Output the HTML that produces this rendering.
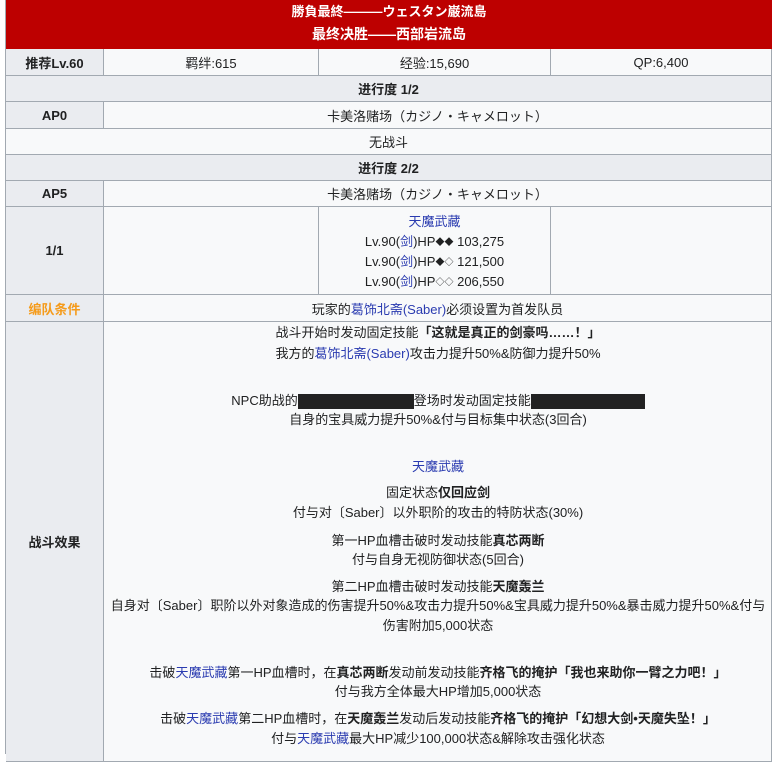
<!DOCTYPE html>
<html><head><meta charset="utf-8"><style>
*{margin:0;padding:0;box-sizing:border-box}
body{width:772px;height:754px;overflow:hidden;background:#fff;font-family:"Liberation Sans","Noto Sans CJK SC",sans-serif;font-size:13px;color:#202122;position:relative}
.a{position:absolute}
.c{position:absolute;border-right:1px solid #a2a9b1;border-bottom:1px solid #a2a9b1;display:flex;align-items:center;justify-content:center;text-align:center;background:#f8f9fa}
.h{background:#eaecf0;font-weight:bold}
.l{position:absolute;left:104px;width:668px;text-align:center;line-height:18px;white-space:nowrap}
b{font-weight:bold}
.bl{color:#2a3bb0}
.k{display:inline-block;background:#222;height:15px;vertical-align:middle}
.d{font-size:9px;vertical-align:1px}
</style></head><body>
<div class="a" style="left:0;top:0;width:6px;height:754px;border-right:1px solid #a2a9b1;background:#fff"></div>
<div class="a" style="left:6px;top:0;width:766px;height:49px;background:#bd0000;color:#fff;font-weight:bold;text-align:center">
<div style="position:absolute;top:3px;width:100%;line-height:18px">勝負最終———ウェスタン巌流島</div>
<div style="position:absolute;top:25px;width:100%;line-height:18px;font-size:14px">最终决胜——西部岩流岛</div>
</div>
<div class="c h" style="left:6px;top:49px;width:98px;height:27px">推荐Lv.60</div>
<div class="c" style="left:104px;top:49px;width:215px;height:27px">羁绊:615</div>
<div class="c" style="left:319px;top:49px;width:232px;height:27px">经验:15,690</div>
<div class="c" style="left:551px;top:49px;width:221px;height:27px">QP:6,400</div>
<div class="c h" style="left:6px;top:76px;width:766px;height:26px">进行度 1/2</div>
<div class="c h" style="left:6px;top:102px;width:98px;height:27px">AP0</div>
<div class="c" style="left:104px;top:102px;width:668px;height:27px">卡美洛赌场（カジノ・キャメロット）</div>
<div class="c" style="left:6px;top:129px;width:766px;height:26px">无战斗</div>
<div class="c h" style="left:6px;top:155px;width:766px;height:26px">进行度 2/2</div>
<div class="c h" style="left:6px;top:181px;width:98px;height:26px">AP5</div>
<div class="c" style="left:104px;top:181px;width:668px;height:26px">卡美洛赌场（カジノ・キャメロット）</div>
<div class="c h" style="left:6px;top:207px;width:98px;height:88px">1/1</div>
<div class="c" style="left:104px;top:207px;width:215px;height:88px"></div>
<div class="c" style="left:319px;top:207px;width:232px;height:88px;display:block;line-height:20px;padding-top:5px">
<div class="bl">天魔武藏</div><div>Lv.90(<span class="bl">剑</span>)HP<span class="d">◆◆</span> 103,275</div><div>Lv.90(<span class="bl">剑</span>)HP<span class="d">◆◇</span> 121,500</div><div>Lv.90(<span class="bl">剑</span>)HP<span class="d">◇◇</span> 206,550</div></div>
<div class="c" style="left:551px;top:207px;width:221px;height:88px"></div>
<div class="c h" style="left:6px;top:295px;width:98px;height:27px;color:#f59b1b">编队条件</div>
<div class="c" style="left:104px;top:295px;width:668px;height:27px">玩家的<span class="bl">葛饰北斋(Saber)</span>必须设置为首发队员</div>
<div class="c h" style="left:6px;top:322px;width:98px;height:440px">战斗效果</div>
<div class="c" style="left:104px;top:322px;width:668px;height:440px"></div>
<div class="l" style="top:324px">战斗开始时发动固定技能<b>「这就是真正的剑豪吗……！」</b></div>
<div class="l" style="top:345px">我方的<span class="bl">葛饰北斋(Saber)</span>攻击力提升50%&amp;防御力提升50%</div>
<div class="l" style="top:392px">NPC助战的<span class="k" style="width:116px"></span>登场时发动固定技能<span class="k" style="width:114px"></span></div>
<div class="l" style="top:411px">自身的宝具威力提升50%&amp;付与目标集中状态(3回合)</div>
<div class="l bl" style="top:458px">天魔武藏</div>
<div class="l" style="top:484px">固定状态<b>仅回应剑</b></div>
<div class="l" style="top:504px">付与对〔Saber〕以外职阶的攻击的特防状态(30%)</div>
<div class="l" style="top:532px">第一HP血槽击破时发动技能<b>真芯两断</b></div>
<div class="l" style="top:551px">付与自身无视防御状态(5回合)</div>
<div class="l" style="top:578px">第二HP血槽击破时发动技能<b>天魔轰兰</b></div>
<div class="l" style="top:597px">自身对〔Saber〕职阶以外对象造成的伤害提升50%&amp;攻击力提升50%&amp;宝具威力提升50%&amp;暴击威力提升50%&amp;付与</div>
<div class="l" style="top:617px">伤害附加5,000状态</div>
<div class="l" style="top:664px">击破<span class="bl">天魔武藏</span>第一HP血槽时，在<b>真芯两断</b>发动前发动技能<b>齐格飞的掩护「我也来助你一臂之力吧！」</b></div>
<div class="l" style="top:683px">付与我方全体最大HP增加5,000状态</div>
<div class="l" style="top:710px">击破<span class="bl">天魔武藏</span>第二HP血槽时，在<b>天魔轰兰</b>发动后发动技能<b>齐格飞的掩护「幻想大剑•天魔失坠！」</b></div>
<div class="l" style="top:730px">付与<span class="bl">天魔武藏</span>最大HP减少100,000状态&amp;解除攻击强化状态</div>
</body></html>
